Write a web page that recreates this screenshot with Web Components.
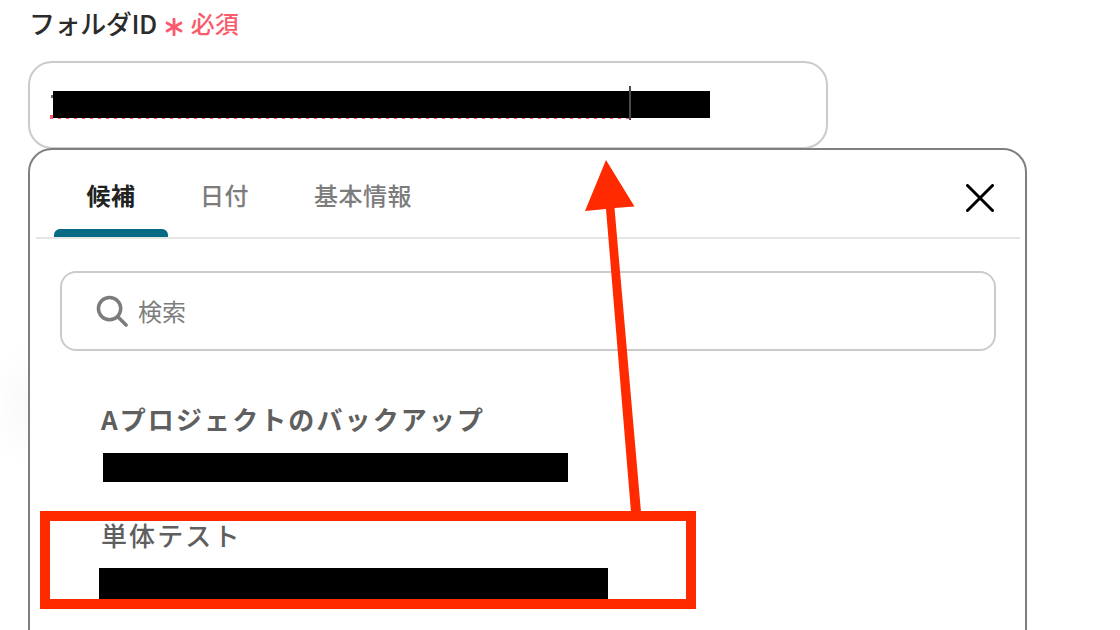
<!DOCTYPE html>
<html lang="ja">
<head>
<meta charset="utf-8">
<title>フォルダID</title>
<style>
  html, body { margin: 0; height: 630px; overflow: hidden; background: #fff; }
  body { font-family: "Noto Sans CJK JP", "Liberation Sans", sans-serif; }
</style>
</head>
<body>
<folder-form>
  <field-label slot="label" text="フォルダID"></field-label>
  <id-input slot="input"></id-input>
  <suggest-popup slot="popup">
    <suggest-item title="Aプロジェクトのバックアップ" bar-left="2" bar-width="465" bar-height="29" bar-top="16" strong></suggest-item>
    <suggest-item title="単体テスト" bar-left="-2" bar-width="509" bar-height="32" bar-top="15"></suggest-item>
  </suggest-popup>
</folder-form>
<red-callout></red-callout>

<script>
class FolderForm extends HTMLElement {
  constructor() {
    super();
    this.attachShadow({ mode: 'open' }).innerHTML = `
      <style>
        :host { display: flex; flex-direction: column; padding: 0 0 0 28px; width: 1000px; height: 630px; overflow: hidden; }
        .wrap { display: flex; flex-direction: column; }
      </style>
      <div class="wrap">
        <slot name="label"></slot>
        <slot name="input"></slot>
        <slot name="popup"></slot>
      </div>`;
  }
}

class FieldLabel extends HTMLElement {
  constructor() {
    super();
    this.attachShadow({ mode: 'open' }).innerHTML = `
      <style>
        :host { display: flex; align-items: center; height: 61px; color: #2b2b2b; font-size: 26px; font-weight: 500; line-height: 1; padding: 0 0 16px 1px; box-sizing: border-box; letter-spacing: -0.4px; }
        .req { display: flex; align-items: center; margin-left: 8px; color: #fb5a6c; font-size: 24px; font-weight: 500; letter-spacing: 0; }
        svg { width: 18px; height: 18px; margin-right: 8px; margin-top: 8px; }
        line { stroke: #fb5a6c; stroke-width: 2.8; stroke-linecap: round; }
      </style>
      <span id="t"></span>
      <span class="req">
        <svg viewBox="0 0 18 18"><line x1="9" y1="1" x2="9" y2="17"/><line x1="2" y1="5" x2="16" y2="13"/><line x1="16" y1="5" x2="2" y2="13"/></svg>
        必須
      </span>`;
    this.shadowRoot.getElementById('t').textContent = this.getAttribute('text');
  }
}

class IdInput extends HTMLElement {
  constructor() {
    super();
    this.attachShadow({ mode: 'open' }).innerHTML = `
      <style>
        :host { display: block; box-sizing: border-box; width: 800px; height: 88px; border: 2px solid #cbcbcb; border-radius: 24px; background: #fff; padding: 28px 0 0 20px; }
        .value { position: relative; height: 27px; width: 580px; }
        .bar { position: absolute; left: 3px; top: 0; width: 657px; height: 27px; background: #000; }
        .tick { position: absolute; left: 1px; top: 4px; width: 2px; height: 3px; background: #6a6a6a; }
        .caret { position: absolute; left: 579px; top: -5px; width: 2px; height: 34px; background: #4a4a4a; }
        .dots { position: absolute; left: 0; top: 26.500px; width: 580px; height: 1.500px; background: repeating-linear-gradient(90deg, #fb5a6c 0 3px, transparent 3px 8px); }
        .start { position: absolute; left: 0; top: 24px; width: 3px; height: 4px; background: #fb5a6c; }
      </style>
      <div class="value">
        <div class="tick"></div>
        <div class="dots"></div>
        <div class="start"></div>
        <div class="bar"></div>
        <div class="caret"></div>
      </div>`;
  }
}

class SuggestPopup extends HTMLElement {
  constructor() {
    super();
    this.attachShadow({ mode: 'open' }).innerHTML = `
      <style>
        :host { display: block; box-sizing: border-box; width: 999px; height: 560px; border: 2px solid #7f7f7f; border-radius: 24px; background: #fff; padding: 0 5px 0 6px; margin-top: -1px; position: relative; }
        :host::before { content: ""; position: absolute; left: -46px; top: 190px; width: 44px; height: 130px; background: radial-gradient(ellipse 44px 65px at 100% 50%, rgba(0,0,0,.025), transparent); }
        .tabs { display: flex; height: 87px; border-bottom: 2px solid #e6e6e6; align-items: stretch; position: relative; }
        .tab { font-size: 24px; line-height: 1; letter-spacing: 0.5px; color: #7c7c7c; font-weight: 500; padding-top: 33px; white-space: nowrap; }
        .tab.on { color: #222; width: 114px; margin-left: 18px; text-align: center; position: relative; font-weight: 700; }
        .tab.on::after { content: ""; position: absolute; left: 0; right: 0; bottom: 0; height: 8px; background: #066a82; border-radius: 6px 6px 0 0; }
        .tab.b { margin-left: 32px; width: 48px; }
        .tab.c { margin-left: 66px; }
        .close { position: absolute; right: 26px; top: 34px; width: 28px; height: 28px; }
        .close path { stroke: #000; stroke-width: 3; stroke-linecap: round; fill: none; }
        .search { display: flex; align-items: center; box-sizing: border-box; width: 936px; height: 80px; margin: 32px 0 0 24px; padding-left: 34px; border: 2px solid #cbcbcb; border-radius: 16px; }
        .search svg { width: 32px; height: 32px; margin-right: 10px; }
        .search span { font-size: 24px; color: #7c7c7c; position: relative; top: -1px; }
        .items { display: flex; flex-direction: column; padding: 50px 0 0 65px; }
      </style>
      <div class="tabs">
        <div class="tab on">候補</div>
        <div class="tab b">日付</div>
        <div class="tab c">基本情報</div>
        <svg class="close" viewBox="0 0 28 28"><path d="M1.500 1.500 L26.500 26.500 M26.500 1.500 L1.500 26.500"/></svg>
      </div>
      <div class="search">
        <svg viewBox="0 0 33 33"><circle cx="14" cy="14" r="11.500" fill="none" stroke="#7c7c7c" stroke-width="3.6"/><path d="M22.500 22.500 L31 31" stroke="#7c7c7c" stroke-width="3.6" stroke-linecap="round" fill="none"/></svg>
        <span>検索</span>
      </div>
      <div class="items"><slot></slot></div>`;
  }
}

class SuggestItem extends HTMLElement {
  constructor() {
    super();
    const a = n => this.getAttribute(n);
    this.attachShadow({ mode: 'open' }).innerHTML = `
      <style>
        :host { display: block; height: 116px; }
        .title { font-size: 26px; line-height: 36px; height: 36px; color: #5f5f5f; font-weight: ${this.hasAttribute('strong') ? 700 : 500}; letter-spacing: 2.1px; white-space: nowrap; }
        .bar { background: #000; position: relative; left: ${a('bar-left')}px; margin-top: ${a('bar-top')}px; width: ${a('bar-width')}px; height: ${a('bar-height')}px; }
      </style>
      <div class="title"></div>
      <div class="bar"></div>`;
    this.shadowRoot.querySelector('.title').textContent = a('title');
  }
}

class RedCallout extends HTMLElement {
  constructor() {
    super();
    this.attachShadow({ mode: 'open' }).innerHTML = `
      <style>
        :host { position: absolute; left: 0; top: 0; width: 1120px; height: 630px; pointer-events: none; }
        svg { display: block; }
      </style>
      <svg width="1120" height="630" viewBox="0 0 1120 630">
        <rect x="45" y="516" width="646" height="88" fill="none" stroke="#ff2a00" stroke-width="10"/>
        <path d="M606 160 L634.500 206.500 L614.500 208 L641 512 L631 512 L606 209 L585 211 Z" fill="#ff2a00"/>
      </svg>`;
  }
}

customElements.define('folder-form', FolderForm);
customElements.define('field-label', FieldLabel);
customElements.define('id-input', IdInput);
customElements.define('suggest-popup', SuggestPopup);
customElements.define('suggest-item', SuggestItem);
customElements.define('red-callout', RedCallout);
</script>
</body>
</html>
